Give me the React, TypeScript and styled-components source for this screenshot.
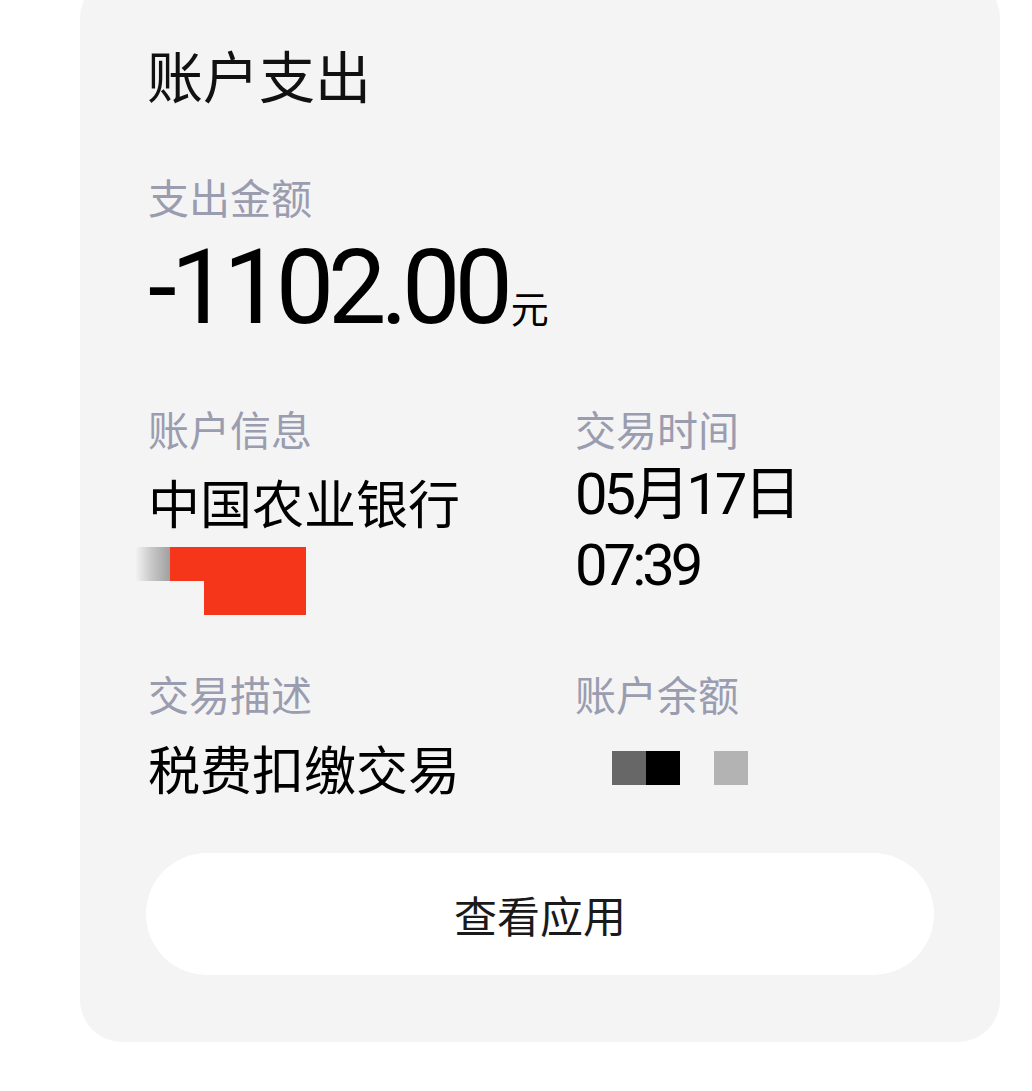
import styled, { createGlobalStyle } from "styled-components";

const GlobalStyle = createGlobalStyle`
  html, body {
    margin: 0;
    padding: 0;
    background: #ffffff;
    overflow: hidden;
  }
  body {
    font-family: Roboto, "Noto Sans CJK SC", sans-serif;
    color: #111111;
  }
`;

const Page = styled.div`
  width: 1032px;
  height: 1091px;
  padding: 0 32px 0 80px;
  box-sizing: border-box;
`;

const Card = styled.div`
  margin-top: -24px;
  background: #f4f4f4;
  border-radius: 42px;
  padding: 66px 66px 67px 66px;
  display: flex;
  flex-direction: column;
`;

const Title = styled.div`
  font-family: "Noto Sans CJK SC", sans-serif;
  font-size: 56px;
  line-height: 64px;
  padding-left: 1px;
`;

const Label = styled.div<{ $top?: number }>`
  font-family: "Noto Sans CJK SC", sans-serif;
  font-size: 41px;
  line-height: 50px;
  color: #9a9cb0;
  margin-top: ${(p) => p.$top ?? 0}px;
  padding-left: 2px;
`;

const Amount = styled.div`
  margin-top: 12px;
  display: flex;
  align-items: baseline;
  line-height: 110px;
  padding-left: 2px;
`;

const Number = styled.span`
  font-family: Roboto, sans-serif;
  font-size: 104px;
  letter-spacing: -6px;
  color: #000;
`;

const Unit = styled.span`
  font-family: "Noto Sans CJK SC", sans-serif;
  font-size: 38px;
  margin-left: 4px;
  color: #000;
`;

const Grid = styled.div<{ $top: number }>`
  display: grid;
  grid-template-columns: 427px 1fr;
  margin-top: ${(p) => p.$top}px;
  align-items: start;
`;

const Value = styled.div<{ $top?: number }>`
  font-family: "Noto Sans CJK SC", sans-serif;
  font-size: 52px;
  line-height: 64px;
  margin-top: ${(p) => p.$top ?? 0}px;
  padding-left: 2px;
  color: #000;
`;

const TimeValue = styled.div<{ $top?: number }>`
  font-family: Roboto, "Noto Sans CJK SC", sans-serif;
  font-size: 58px;
  line-height: 71px;
  margin-top: ${(p) => p.$top ?? 0}px;
  padding-left: 2px;
  letter-spacing: -4px;
  color: #000;
`;

const Mask = styled.div<{ $top: number; $left: number }>`
  display: grid;
  grid-template-columns: repeat(5, 34px);
  grid-auto-rows: 34px;
  margin-top: ${(p) => p.$top}px;
  margin-left: ${(p) => p.$left}px;
`;

const Cell = styled.div<{ $c: string }>`
  background: ${(p) => p.$c};
`;

const Button = styled.div`
  margin-top: 53px;
  height: 122px;
  border-radius: 61px;
  background: #ffffff;
  display: flex;
  align-items: center;
  justify-content: center;
  font-family: "Noto Sans CJK SC", sans-serif;
  font-size: 43px;
  color: #1a1a1a;
`;

const grayFade = "linear-gradient(90deg, #f2f2f2 0%, #c8c8c8 45%, #a0a0a0 100%)";
const red = "#f5361a";

export default function App() {
  return (
    <Page>
      <GlobalStyle />
      <Card>
        <Title>账户支出</Title>
        <Label $top={65}>支出金额</Label>
        <Amount>
          <Number>-1102.00</Number>
          <Unit>元</Unit>
        </Amount>

        <Grid $top={41}>
          <div>
            <Label>账户信息</Label>
            <Value $top={17}>中国农业银行</Value>
            <Mask $top={13} $left={-10}>
              <Cell $c={grayFade} />
              <Cell $c={red} />
              <Cell $c={red} />
              <Cell $c={red} />
              <Cell $c={red} />
              <Cell $c="transparent" />
              <Cell $c="transparent" />
              <Cell $c={red} />
              <Cell $c={red} />
              <Cell $c={red} />
            </Mask>
          </div>
          <div>
            <Label>交易时间</Label>
            <TimeValue $top={6}>05月17日</TimeValue>
            <TimeValue>07:39</TimeValue>
          </div>
        </Grid>

        <Grid $top={53}>
          <div>
            <Label>交易描述</Label>
            <Value $top={18}>税费扣缴交易</Value>
          </div>
          <div>
            <Label>账户余额</Label>
            <Mask $top={33} $left={39}>
              <Cell $c="#676767" />
              <Cell $c="#000000" />
              <Cell $c="transparent" />
              <Cell $c="#b3b3b3" />
            </Mask>
          </div>
        </Grid>

        <Button>查看应用</Button>
      </Card>
    </Page>
  );
}
